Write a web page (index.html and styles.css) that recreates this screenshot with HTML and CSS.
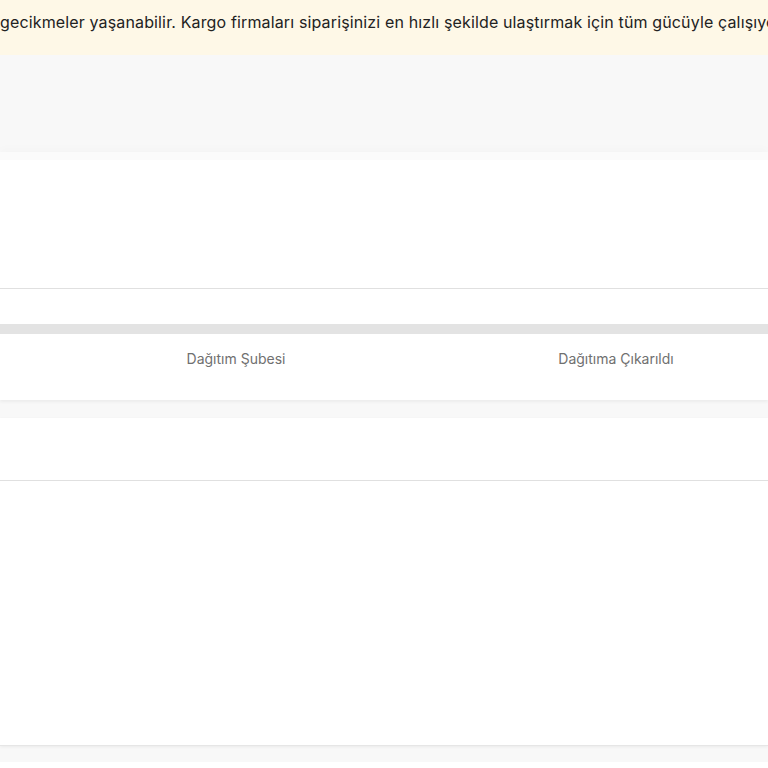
FILE: index.html
```html
<!DOCTYPE html>
<html lang="tr">
<head>
    <meta charset="UTF-8">
    <meta name="viewport" content="width=device-width, initial-scale=1.0">
    <title>Kargo Takip</title>
    <link rel="stylesheet" href="styles.css">
</head>
<body>
    <div class="notice">
        <p>gecikmeler yaşanabilir. Kargo firmaları siparişinizi en hızlı şekilde ulaştırmak için tüm gücüyle çalışıyor.</p>
    </div>

    <div class="page">
        <div class="page-head"></div>

        <section class="card summary">
            <div class="summary-body"></div>
            <div class="summary-foot"></div>
        </section>

        <div class="progress-track"></div>

        <section class="card steps">
            <div class="step">Dağıtım Şubesi</div>
            <div class="step">Dağıtıma Çıkarıldı</div>
        </section>

        <section class="card history">
            <div class="history-head"></div>
            <div class="history-body"></div>
        </section>
    </div>
</body>
</html>
```

FILE: styles.css
```css
body {
    margin: 0;
    font-family: Inter, "Noto Sans", sans-serif;
    background-color: #ffffff;
    overflow: hidden;
}

.notice {
    background-color: #fef8e7;
    height: 55px;
    overflow: hidden;
}

.notice p {
    margin: 0;
    padding-top: 12px;
    font-size: 16px;
    line-height: 20px;
    letter-spacing: 0.14px;
    color: #222;
    white-space: nowrap;
}

.page {
    background-color: #f8f8f8;
    padding-top: 97px;
    padding-bottom: 16px;
}

.card {
    background: #ffffff;
}

.summary {
    box-shadow: 0 -4px 8px rgba(0, 0, 0, 0.015);
    border-top: 8px solid #fbfbfb;
}

.summary-body {
    height: 128px;
    border-bottom: 1px solid #e0e0e0;
}

.summary-foot {
    height: 35px;
}

.progress-track {
    height: 10px;
    background-color: #e3e3e3;
}

.steps {
    display: flex;
    padding-left: 46px;
    padding-top: 16px;
    height: 50px;
    box-shadow: 0 2px 3px rgba(0, 0, 0, 0.05);
    margin-bottom: 18px;
}

.step {
    width: 380px;
    flex-shrink: 0;
    text-align: center;
    font-size: 14px;
    line-height: 18px;
    color: #707070;
}

.history {
    box-shadow: 0 1px 3px rgba(0, 0, 0, 0.06);
}

.history-head {
    height: 62px;
    border-bottom: 1px solid #e0e0e0;
}

.history-body {
    height: 264px;
    border-bottom: 1px solid #e6e6e6;
}
```
